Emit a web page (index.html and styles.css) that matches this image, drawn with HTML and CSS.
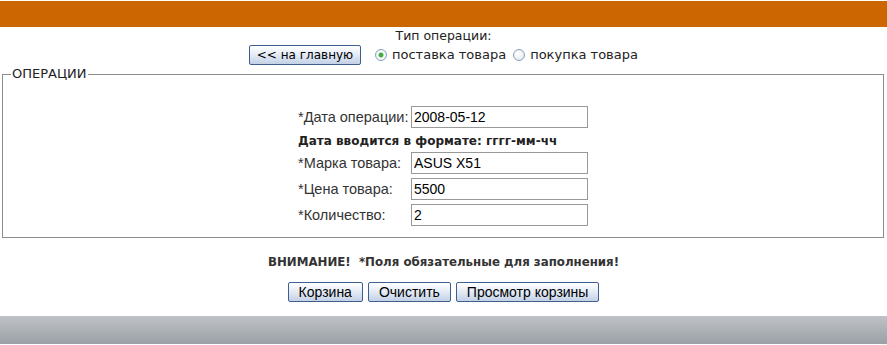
FILE: index.html
```html
<!DOCTYPE html>
<html lang="ru">
<head>
  <meta charset="UTF-8">
  <title>Операции</title>
  <link rel="stylesheet" href="styles.css">
</head>
<body>
<div class="topbar"></div>

<form class="opform">
  <div class="optype">
    <div class="optype-title">Тип операции:</div>
    <div class="optype-row">
      <button type="button" class="btn btn-home">&lt;&lt; на главную</button>
      <label class="radio"><input type="radio" name="op" checked> поставка товара</label>
      <label class="radio"><input type="radio" name="op"> покупка товара</label>
    </div>
  </div>

  <fieldset class="ops">
    <legend>ОПЕРАЦИИ</legend>
    <table class="fields">
      <tr>
        <td class="lbl">*Дата операции:</td>
        <td><input type="text" class="txt" value="2008-05-12"></td>
      </tr>
      <tr>
        <td colspan="2" class="hint">Дата вводится в формате: гггг-мм-чч</td>
      </tr>
      <tr>
        <td class="lbl">*Марка товара:</td>
        <td><input type="text" class="txt" value="ASUS X51"></td>
      </tr>
      <tr>
        <td class="lbl">*Цена товара:</td>
        <td><input type="text" class="txt" value="5500"></td>
      </tr>
      <tr>
        <td class="lbl">*Количество:</td>
        <td><input type="text" class="txt" value="2"></td>
      </tr>
    </table>
  </fieldset>

  <p class="notice">ВНИМАНИЕ!&nbsp; *Поля обязательные для заполнения!</p>

  <div class="actions">
    <button type="button" class="btn">Корзина</button>
    <button type="button" class="btn">Очистить</button>
    <button type="button" class="btn">Просмотр корзины</button>
  </div>
</form>

<div class="bottombar"></div>
</body>
</html>
```

FILE: styles.css
```css
* {
  padding: 0;
  margin: 0;
  box-sizing: border-box;
}

body {
  font-family: "DejaVu Sans", Verdana, sans-serif;
  font-size: 13px;
  color: #222;
  background: #fff;
}

.topbar {
  height: 26px;
  margin-top: 1px;
  background: #cc6600;
}

.optype {
  text-align: center;
}

.optype-title {
  height: 16px;
  line-height: 16px;
  margin-top: 1px;
  font-size: 12.5px;
}

.optype-row {
  display: flex;
  justify-content: center;
  align-items: center;
  gap: 7px;
  height: 21px;
}

.radio {
  display: flex;
  align-items: center;
  gap: 5px;
  font-size: 13px;
}

.radio input {
  appearance: none;
  width: 12px;
  height: 12px;
  border: 1px solid #8aa0b8;
  border-radius: 50%;
  background: radial-gradient(circle at 40% 35%, #fff, #dfe5ec);
}

.radio input:checked {
  background: radial-gradient(circle, #3fae3f 0 2px, #fff 3px, #dfe5ec);
}

.btn {
  font-family: "Liberation Sans", Arial, sans-serif;
  font-size: 14px;
  color: #000;
  height: 20px;
  padding: 0 10px;
  border: 1px solid #3f5f8e;
  border-radius: 2px;
  background: linear-gradient(#ffffff, #e6edf7 45%, #c3d1e6);
  cursor: pointer;
}

.btn-home {
  width: 112px;
  padding: 0;
  font-family: "DejaVu Sans", Verdana, sans-serif;
  font-size: 12px;
  margin-right: 7px;
}

.ops {
  margin: 3px 3px 0 2px;
  border: 1px solid #8c8c8c;
  height: 170px;
  padding: 0;
}

.ops legend {
  margin-left: 8px;
  padding: 0 1px;
  font-size: 13px;
  line-height: 12px;
}

.fields {
  margin: 24px auto 0;
  border-collapse: collapse;
}

.fields td {
  padding: 0;
  height: 26px;
  vertical-align: middle;
}

.fields td.lbl {
  font-family: "Liberation Sans", Arial, sans-serif;
  font-size: 14.5px;
  color: #333;
  width: 113px;
}

.fields td.hint {
  height: 20px;
  font-weight: bold;
  font-size: 12px;
  padding-top: 2px;
}

.txt {
  width: 177px;
  height: 22px;
  border: 1px solid #999;
  padding: 0 2px;
  font-family: "Liberation Sans", Arial, sans-serif;
  font-size: 14px;
  color: #000;
}

.notice {
  margin-top: 17px;
  text-align: center;
  font-weight: bold;
  font-size: 11.8px;
  color: #333;
}

.actions {
  display: flex;
  justify-content: center;
  gap: 5px;
  margin-top: 13px;
}

.bottombar {
  height: 28px;
  margin-top: 14px;
  background: linear-gradient(#bfc2c6, #9aa0a6);
}
```
